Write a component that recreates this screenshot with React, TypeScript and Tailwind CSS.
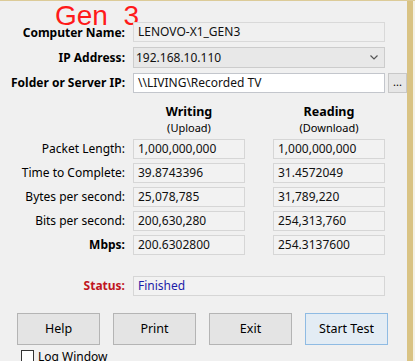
import React from "react";

const font = { fontFamily: '"Noto Sans", "Liberation Sans", sans-serif' };

function Field({ text, w, className = "" }: { text: string; w: string; className?: string }) {
  return (
    <div className={`${w} h-[20px] border border-[#d6d6d6] bg-[#f2f2f2] flex items-center pl-[4px] text-[12px] text-[#111] ${className}`}>
      {text}
    </div>
  );
}

const rows: { label: string; w: string; r: string; bold?: boolean }[] = [
  { label: "Packet Length:", w: "1,000,000,000", r: "1,000,000,000" },
  { label: "Time to Complete:", w: "39.8743396", r: "31.4572049" },
  { label: "Bytes per second:", w: "25,078,785", r: "31,789,220" },
  { label: "Bits per second:", w: "200,630,280", r: "254,313,760" },
  { label: "Mbps:", w: "200.6302800", r: "254.3137600", bold: true },
];

export default function App() {
  return (
    <div className="w-[415px] h-[361px] overflow-hidden flex flex-col bg-[#f0f0f0]" style={font}>
      <div className="h-[1px] bg-[#dccb98] w-full shrink-0" />
      <div className="flex flex-1 min-h-0">
        <div className="w-[407px] flex flex-col">
          {/* heading */}
          <div className="h-[21px] pl-[55px] relative">
            <span
              className="text-[28px] leading-none text-[#ff1a1a] whitespace-pre block pt-[1px]"
              style={{ fontFamily: '"Liberation Sans", Arial, sans-serif' }}
            >
              Gen  3
            </span>
          </div>
          {/* top form */}
          <div className="grid grid-cols-[125px_252px_auto] gap-x-[8px] items-center relative z-10">
            <div className="text-right font-bold text-[12px] h-[20px] leading-[20px] pt-[1px]">Computer Name:</div>
            <div className="h-[20px] border border-[#d9d9d9] bg-[#f0f0f0] flex items-center pl-[4px] text-[12px] text-[#111]">
              LENOVO-X1_GEN3
            </div>
            <div />
            <div className="text-right font-bold text-[12px] mt-[5px] leading-[21px]">IP Address:</div>
            <div className="mt-[5px] h-[21px] border border-[#cccccc] bg-[#e8e8e8] flex items-center justify-between pl-[2px] pr-[6px] text-[12px] text-[#111]">
              <span>192.168.10.110</span>
              <svg width="8" height="5" viewBox="0 0 8 5">
                <path d="M0.5 0.5 L4 4 L7.5 0.5" fill="none" stroke="#555" strokeWidth="1.2" />
              </svg>
            </div>
            <div />
            <div className="text-right font-bold text-[12px] mt-[5px] leading-[20px]">Folder or Server IP:</div>
            <div className="mt-[5px] h-[20px] border border-[#c3c6cc] bg-white flex items-center pl-[4px] text-[12px] text-[#111]">
              {"\\\\LIVING\\Recorded TV"}
            </div>
            <div className="mt-[5px] ml-[-5px] w-[19px] h-[20px] border border-[#c8c8c8] bg-[#e6e6e6] flex items-end justify-center text-[11px] leading-[14px] pb-[3px]">
              ...
            </div>
          </div>

          {/* column headers */}
          <div className="flex pl-[133px] pt-[11px]">
            <div className="w-[112px] flex flex-col items-center leading-[16px]">
              <span className="font-bold text-[12.5px]">Writing</span>
              <span className="text-[11px]">(Upload)</span>
            </div>
            <div className="w-[112px] ml-[28px] flex flex-col items-center leading-[16px]">
              <span className="font-bold text-[12.5px]">Reading</span>
              <span className="text-[11px]">(Download)</span>
            </div>
          </div>

          {/* data rows */}
          <div className="flex flex-col gap-[4px] mt-[3px]">
            {rows.map((r) => (
              <div key={r.label} className="flex items-center h-[20px]">
                <div className={`w-[125px] text-right text-[12px] ${r.bold ? "font-bold" : ""}`}>{r.label}</div>
                <Field text={r.w} w="w-[112px]" className="ml-[8px]" />
                <Field text={r.r} w="w-[112px]" className="ml-[28px]" />
              </div>
            ))}
          </div>

          {/* status */}
          <div className="flex items-center h-[20px] mt-[21px]">
            <div className="w-[125px] text-right text-[12px] font-bold text-[#c0161e]">Status:</div>
            <div className="ml-[8px] w-[252px] h-[20px] border border-[#d6d6d6] bg-[#f2f2f2] flex items-center pl-[4px] text-[12px] text-[#1c1ca8]">
              Finished
            </div>
          </div>

          {/* buttons */}
          <div className="flex gap-[13px] pl-[17px] mt-[17px]">
            {["Help", "Print", "Exit"].map((b) => (
              <div
                key={b}
                className="w-[83px] h-[32px] border border-[#b4b4b4] bg-[#e4e4e4] flex items-center justify-center text-[12.5px]"
              >
                {b}
              </div>
            ))}
            <div className="w-[83px] h-[32px] border border-[#8fbbe3] bg-[#e3ecf4] flex items-center justify-center text-[12.5px]">
              Start Test
            </div>
          </div>

          {/* checkbox */}
          <div className="flex items-start pl-[21px] mt-[5px]">
            <div className="w-[13px] h-[13px] border border-[#333] bg-white shrink-0" />
            <span className="ml-[4px] text-[12px] leading-[16px] mt-[-1px]">Log Window</span>
          </div>
        </div>
        <div className="w-[6px] bg-[#d9c384]" />
        <div className="w-[2px] bg-[#f4f1e6]" />
      </div>
    </div>
  );
}
